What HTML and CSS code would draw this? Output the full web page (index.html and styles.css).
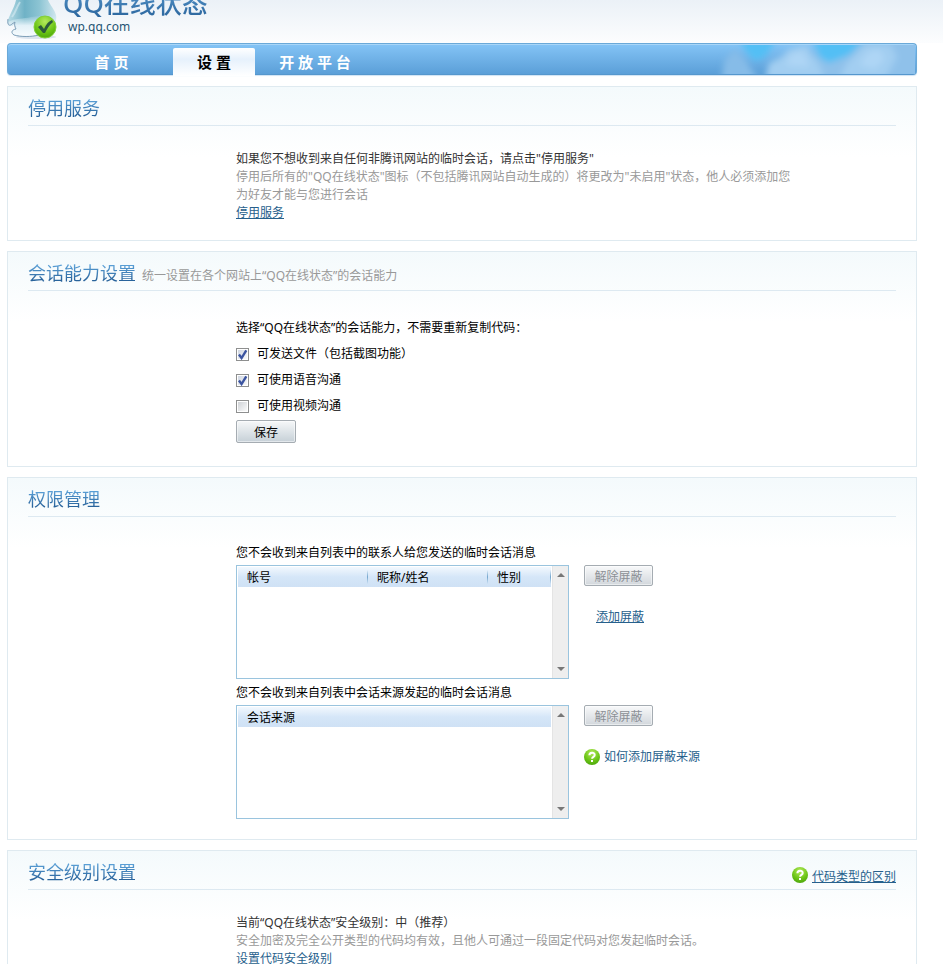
FILE: index.html
```html
<!DOCTYPE html>
<html lang="zh-CN">
    <head>
        <meta charset="UTF-8">
        <meta name="viewport" content="width=device-width, initial-scale=1.0">
        <title>QQ在线状态</title>
        <link rel="stylesheet" href="styles.css">
    </head>
    <body>
        <svg class="defs" width="0" height="0" aria-hidden="true">
            <defs>
                <radialGradient id="green" cx="50%" cy="25%" r="80%">
                    <stop offset="0" stop-color="#b4ea5c"/>
                    <stop offset="0.6" stop-color="#6cc516"/>
                    <stop offset="1" stop-color="#48a20c"/>
                </radialGradient>
                <symbol id="help" viewBox="0 0 16 16">
                    <circle cx="8" cy="8" r="8" fill="url(#green)"/>
                    <path d="M5.4 6.2C5.4 2.9 10.7 2.9 10.7 6C10.7 8 8.1 7.8 8.1 9.8" fill="none" stroke="#fff" stroke-width="2"/>
                    <rect x="7" y="11" width="2" height="2" fill="#fff"/>
                </symbol>
                <symbol id="arrow-up" viewBox="0 0 8 4"><path d="M4 0L8 4H0Z" fill="#777"/></symbol>
                <symbol id="arrow-down" viewBox="0 0 8 4"><path d="M0 0H8L4 4Z" fill="#777"/></symbol>
            </defs>
        </svg>
        <header class="header">
            <svg class="logo" width="50" height="39" viewBox="0 0 50 39">
                <defs>
                    <linearGradient id="penguin" x1="0" y1="0" x2="1" y2="0">
                        <stop offset="0" stop-color="#b9dce6"/>
                        <stop offset="0.35" stop-color="#6fb2c6"/>
                        <stop offset="0.65" stop-color="#8cc4d3"/>
                        <stop offset="1" stop-color="#cfe6ee"/>
                    </linearGradient>
                    <linearGradient id="belly" x1="0" y1="0" x2="0" y2="1">
                        <stop offset="0" stop-color="#d5ebf3" stop-opacity="0"/>
                        <stop offset="0.5" stop-color="#e3f1f8"/>
                        <stop offset="1" stop-color="#f7fbfe"/>
                    </linearGradient>
                </defs>
                <ellipse cx="29" cy="37" rx="20" ry="2" fill="#dbe4ee"/>
                <path d="M9 0H41C43 5 48 10 49 15C50 20 48 25 45 27L36 34C28 37 14 37 7 35C3 33 5 30 9 29C8 27 8 25 8 23C6 26 3 27 1 25C-1 19 7 10 9 0Z" fill="url(#penguin)"/>
                <path d="M1 22C8 18 16 19 24 17C34 16 42 14 49 15C50 20 48 25 45 27L36 34C28 37 14 37 7 35C3 33 5 30 9 29C8 27 8 25 8 23C6 26 3 27 1 25Z" fill="url(#belly)"/>
                <path d="M1 19C0 24 2 27 5 24L8 22C7 25 8 27 9 29C4 30 4 33 7 35C14 37 24 37 32 35" fill="none" stroke="#7f9fb8"/>
                <path d="M13 2C9 8 9 12 5 17" fill="none" stroke="#d8edf3" stroke-width="2" opacity="0.6"/>
                <circle cx="38" cy="27" r="11" fill="url(#green)" stroke="#83cf3a"/>
                <path d="M31 27L34 25L37 29C39 24 42 21 45 20L46 22C42 25 40 29 38 33H36Z" fill="#2c5a3c"/>
            </svg>
            <div class="brand">
                <h1>QQ在线状态</h1>
                <p>wp.qq.com</p>
            </div>
        </header>
        <div class="wrap">
            <nav class="nav">
                <a class="tab tab-home" href="#">首 页</a>
                <a class="tab tab-current" href="#">设 置</a>
                <a class="tab tab-open" href="#">开 放 平 台</a>
                <svg class="clouds" width="200" height="29" viewBox="0 0 200 29">
                    <defs>
                        <filter id="soft" x="-10%" y="-20%" width="120%" height="140%"><feGaussianBlur stdDeviation="3"/></filter>
                    </defs>
                    <g filter="url(#soft)">
                        <path d="M100 -6H210V34H100Z" fill="#8fc1ea"/>
                        <path d="M24 -6H62L50 12L40 16L32 8ZM98 -6H150L134 10L114 18L104 12Z" fill="#52bff5"/>
                        <path d="M6 34L10 14L20 4L30 14L36 24L44 34Z" fill="#86bce8"/>
                        <path d="M50 34L54 18L66 12L74 4L92 0L98 10L104 20L110 34ZM124 34L132 18L140 10L150 0H176L182 12L170 34Z" fill="#a2cef1"/>
                        <path d="M70 20L76 10L86 6L92 14L94 22ZM144 20L152 8L164 4L170 14L160 24Z" fill="#aed5f5"/>
                    </g>
                </svg>
            </nav>
            <section class="panel">
                <div class="panel-head">
                    <h2>停用服务</h2>
                </div>
                <div class="panel-body">
                    <p class="dark">如果您不想收到来自任何非腾讯网站的临时会话，请点击"停用服务"</p>
                    <p class="tip">停用后所有的"QQ在线状态"图标（不包括腾讯网站自动生成的）将更改为"未启用"状态，他人必须添加您为好友才能与您进行会话</p>
                    <p><a href="#">停用服务</a></p>
                </div>
            </section>
            <section class="panel">
                <div class="panel-head">
                    <h2>会话能力设置</h2>
                    <span class="sub">统一设置在各个网站上“QQ在线状态”的会话能力</span>
                </div>
                <form class="panel-body ability">
                    <p>选择“QQ在线状态”的会话能力，不需要重新复制代码：</p>
                    <label><input type="checkbox" checked>可发送文件（包括截图功能）</label>
                    <label><input type="checkbox" checked>可使用语音沟通</label>
                    <label><input type="checkbox">可使用视频沟通</label>
                    <button class="btn btn-save" type="button">保存</button>
                </form>
            </section>
            <section class="panel">
                <div class="panel-head">
                    <h2>权限管理</h2>
                </div>
                <div class="panel-body rights">
                    <p>您不会收到来自列表中的联系人给您发送的临时会话消息</p>
                    <div class="row">
                        <div class="list">
                            <table>
                                <thead>
                                    <tr><th class="col-id">帐号</th><th class="col-name">昵称/姓名</th><th class="col-sex">性别</th></tr>
                                </thead>
                            </table>
                            <div class="scroll">
                                <svg width="8" height="4"><use href="#arrow-up"/></svg>
                                <svg width="8" height="4"><use href="#arrow-down"/></svg>
                            </div>
                        </div>
                        <div class="side">
                            <button class="btn" type="button" disabled>解除屏蔽</button>
                            <a class="add" href="#">添加屏蔽</a>
                        </div>
                    </div>
                    <p>您不会收到来自列表中会话来源发起的临时会话消息</p>
                    <div class="row">
                        <div class="list">
                            <table>
                                <thead>
                                    <tr><th>会话来源</th></tr>
                                </thead>
                            </table>
                            <div class="scroll">
                                <svg width="8" height="4"><use href="#arrow-up"/></svg>
                                <svg width="8" height="4"><use href="#arrow-down"/></svg>
                            </div>
                        </div>
                        <div class="side">
                            <button class="btn" type="button" disabled>解除屏蔽</button>
                            <a class="help plain" href="#"><svg width="16" height="16"><use href="#help"/></svg>如何添加屏蔽来源</a>
                        </div>
                    </div>
                </div>
            </section>
            <section class="panel">
                <div class="panel-head">
                    <h2>安全级别设置</h2>
                    <div class="help help-right"><svg width="16" height="16"><use href="#help"/></svg><a href="#">代码类型的区别</a></div>
                </div>
                <div class="panel-body">
                    <p class="dark">当前“QQ在线状态”安全级别：中（推荐）</p>
                    <p class="tip">安全加密及完全公开类型的代码均有效，且他人可通过一段固定代码对您发起临时会话。</p>
                    <p><a href="#">设置代码安全级别</a></p>
                </div>
            </section>
        </div>
    </body>
</html>
```

FILE: styles.css
```css
*{
    box-sizing:border-box;
}
html{
    height:100%;
    overflow:hidden;
}
body{
    margin:0;
    background:#fff linear-gradient(#ebf1f7,#fcfdfe) no-repeat 0 0/100% 43px;
    color:#000;
    font:12px/18px "Noto Sans","Noto Sans CJK SC",sans-serif;
}
h1,h2,p{
    margin:0;
    font-weight:normal;
}
a{
    color:#26608c;
}
.defs{
    position:absolute;
}

/* header */
.header{
    display:flex;
    align-items:flex-end;
    gap:6px;
    height:43px;
    padding:0 26px 4px 7px;
    overflow:hidden;
}
.logo{
    flex:none;
}
.brand h1{
    font-size:26px;
    line-height:32px;
    font-weight:500;
    color:#3a78ae;
    background:linear-gradient(#5a9bd0,#28629a);
    -webkit-background-clip:text;
    background-clip:text;
    -webkit-text-fill-color:transparent;
}
.brand p{
    padding:0 0 4px 5px;
    line-height:16px;
    color:#1f5573;
}

/* navigation */
.wrap{
    margin:0 26px 0 7px;
}
.nav{
    display:flex;
    height:32px;
    padding:0 1px 0 42px;
    margin-bottom:11px;
    border:1px solid #6aa9d8;
    border-bottom-color:#5597cd;
    border-radius:4px;
    background:linear-gradient(#84c4f6,#5b9fd8);
    box-shadow:inset 0 1px #a8d6f8,0 1px 1px #cfe3f4;
}
.tab{
    display:flex;
    justify-content:center;
    align-items:center;
    height:30px;
    padding-top:6px;
    color:#fff;
    font-size:15px;
    font-weight:bold;
    text-decoration:none;
}
.tab-home{
    width:123px;
}
.tab-current{
    width:82px;
    margin-top:4px;
    height:28px;
    padding:0;
    border-radius:2px 2px 0 0;
    background:linear-gradient(#fff,#e6f1fc 40%,#fff);
    color:#000;
}
.tab-open{
    width:120px;
}
.clouds{
    margin:1px 0 0 auto;
}

/* panels */
.panel{
    margin-bottom:10px;
    border:1px solid #dfeaf0;
    background:linear-gradient(#f4fafc,#fff 70px);
}
.panel-head{
    display:flex;
    align-items:center;
    gap:6px;
    height:39px;
    margin:0 20px;
    padding-top:4px;
    border-bottom:1px solid #dde9f1;
}
.panel-head h2{
    font-size:18px;
    line-height:26px;
    color:#3a78ae;
    background:linear-gradient(#5a9fd6 20%,#28629a 80%);
    -webkit-background-clip:text;
    background-clip:text;
    -webkit-text-fill-color:transparent;
}
.sub,.tip{
    color:#999;
}
.sub{
    padding-top:6px;
}
.dark{
    color:#333;
}
.panel-body{
    padding:24px 120px 18px 228px;
}
.ability{
    display:flex;
    flex-direction:column;
    align-items:flex-start;
    line-height:26px;
    padding-bottom:23px;
}
.ability label{
    display:flex;
    align-items:center;
    gap:8px;
}
.ability input{
    appearance:none;
    width:13px;
    height:13px;
    margin:0;
    border:1px solid #8e8f8f;
    background:linear-gradient(135deg,#cfd2d6,#fafafa) content-box #f4f4f4;
    padding:1px;
}
.ability input:checked{
    background:url("data:image/svg+xml,%3Csvg xmlns='http://www.w3.org/2000/svg' viewBox='0 0 11 11'%3E%3Cpath d='M2.5 5.5L4.7 8.5L8.7 2' fill='none' stroke='%233b54a0' stroke-width='2'/%3E%3C/svg%3E") border-box,linear-gradient(135deg,#cfd6e2,#fafafa) content-box #f4f4f4;
}
.btn{
    width:69px;
    height:21px;
    padding:2px 0 0;
    border:1px solid #a5acb2;
    border-radius:2px;
    background:linear-gradient(#f6f8f9,#c6d0d7);
    box-shadow:inset 0 0 0 1px rgba(255,255,255,0.5);
    color:#000;
    font:12px/18px "Noto Sans","Noto Sans CJK SC",sans-serif;
}
.btn:disabled{
    background:linear-gradient(#f8f9fa,#d2d7dc);
    color:#8c9096;
}
.btn-save{
    width:60px;
    height:23px;
    margin-top:1px;
}

/* block lists */
.rights{
    padding:22px 20px 20px 228px;
}
.rights p{
    padding-top:2px;
    line-height:24px;
}
.row{
    display:flex;
    gap:15px;
}
.list{
    display:flex;
    align-items:flex-start;
    width:333px;
    height:114px;
    border:1px solid #9ac4de;
    background:#fff;
}
.list table{
    flex:1;
    table-layout:fixed;
    border-collapse:collapse;
    margin:1px;
}
.list th{
    height:20px;
    padding:1px 0 0 9px;
    font-weight:normal;
    text-align:left;
    background:linear-gradient(#f2f8fe,#d5e6f8 50%,#cfe1f5);
}
.list .col-id,.list .col-name,.list .col-sex{
    background:linear-gradient(transparent,#74a6cc,transparent) no-repeat right center/1px 14px,linear-gradient(#f2f8fe,#d5e6f8 50%,#cfe1f5);
}
.col-id{
    width:130px;
}
.col-name{
    width:120px;
}
.scroll{
    display:flex;
    flex-direction:column;
    justify-content:space-between;
    align-items:center;
    align-self:stretch;
    width:16px;
    padding:7px 0;
    background:#eee;
    border-left:1px solid #e4e4e4;
}
.side{
    display:flex;
    flex-direction:column;
    align-items:flex-start;
    gap:22px;
}
.add{
    margin-left:12px;
}
.help{
    display:flex;
    align-items:center;
    gap:4px;
}
.plain{
    text-decoration:none;
}
.help-right{
    margin-left:auto;
    padding-top:6px;
}
.help-right a{
    padding-top:3px;
}
```
